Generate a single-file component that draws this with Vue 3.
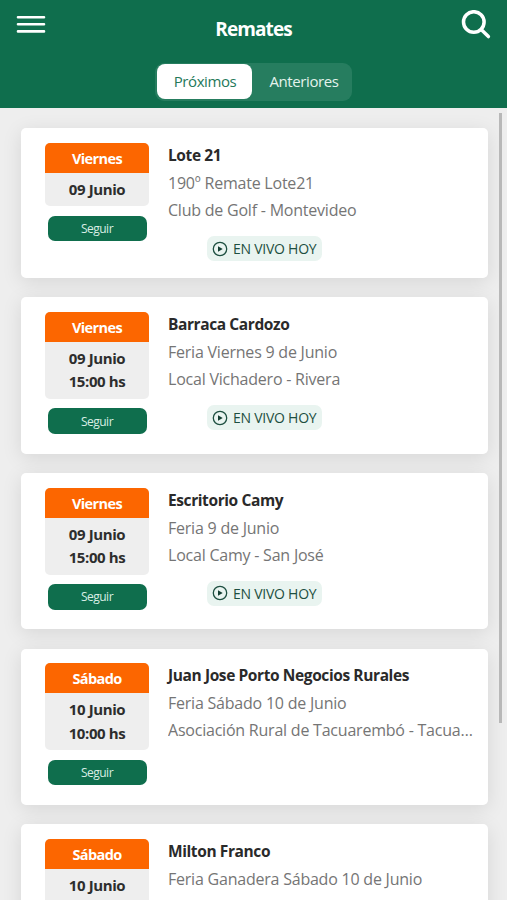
<script setup>
import { ref } from 'vue'

const tab = ref('proximos')

const remates = [
  { dia: 'Viernes', fecha: '09 Junio', hora: '', titulo: 'Lote 21', nombre: '190º Remate Lote21', lugar: 'Club de Golf - Montevideo', vivo: true },
  { dia: 'Viernes', fecha: '09 Junio', hora: '15:00 hs', titulo: 'Barraca Cardozo', nombre: 'Feria Viernes 9 de Junio', lugar: 'Local Vichadero - Rivera', vivo: true },
  { dia: 'Viernes', fecha: '09 Junio', hora: '15:00 hs', titulo: 'Escritorio Camy', nombre: 'Feria 9 de Junio', lugar: 'Local Camy - San José', vivo: true },
  { dia: 'Sábado', fecha: '10 Junio', hora: '10:00 hs', titulo: 'Juan Jose Porto Negocios Rurales', nombre: 'Feria Sábado 10 de Junio', lugar: 'Asociación Rural de Tacuarembó - Tacuarembó', vivo: false },
  { dia: 'Sábado', fecha: '10 Junio', hora: '10:00 hs', titulo: 'Milton Franco', nombre: 'Feria Ganadera Sábado 10 de Junio', lugar: 'Local Casa de Florida', vivo: false }
]
</script>

<template>
  <div class="app">
    <header class="header">
      <div class="top-bar">
        <svg class="menu-icon" width="30" height="20" viewBox="0 0 30 20">
          <path d="M2 2.2h26M2 9.3h26M2 16.4h26" />
        </svg>
        <h1>Remates</h1>
        <svg class="search-icon" width="30" height="30" viewBox="0 0 30 30">
          <circle cx="12.8" cy="12" r="10.3" />
          <path d="M20.4 19.8l7 6.8" />
        </svg>
      </div>
      <div class="tabs">
        <button :class="['tab', { active: tab === 'proximos' }]" @click="tab = 'proximos'">Próximos</button>
        <button :class="['tab', { active: tab === 'anteriores' }]" @click="tab = 'anteriores'">Anteriores</button>
      </div>
    </header>

    <main class="list">
      <article v-for="remate in remates" :key="remate.titulo" class="card">
        <div class="left">
          <div class="date">
            <div class="day">{{ remate.dia }}</div>
            <div class="when">
              <div>{{ remate.fecha }}</div>
              <div v-if="remate.hora">{{ remate.hora }}</div>
            </div>
          </div>
          <button class="follow">Seguir</button>
        </div>
        <div class="info">
          <h2>{{ remate.titulo }}</h2>
          <p>{{ remate.nombre }}</p>
          <p>{{ remate.lugar }}</p>
          <div v-if="remate.vivo" class="live">
            <svg width="16" height="16" viewBox="0 0 16 16">
              <circle cx="8" cy="8" r="6.7" />
              <path d="M6 5.2v5.6l4.7-2.8z" />
            </svg>
            <span>EN VIVO HOY</span>
          </div>
        </div>
      </article>
    </main>
    <div class="scrollbar"></div>
  </div>
</template>

<style>
body {
  background: #eeeeee;
}
</style>

<style scoped>
.app {
  position: relative;
  height: 900px;
  overflow: hidden;
  background: #eeeeee;
  font-family: 'Open Sans', 'Noto Sans', sans-serif;
}

button {
  border: 0;
  padding: 0;
  font-family: inherit;
}

.header {
  height: 108px;
  background: #0f6e4d;
}

.top-bar {
  display: flex;
  justify-content: space-between;
  height: 62.5px;
  padding: 0 16px;
}

.menu-icon,
.search-icon {
  fill: none;
  stroke: #fff;
  stroke-linecap: round;
}

.menu-icon {
  margin-top: 15px;
  stroke-width: 2.6;
}

.search-icon {
  margin-top: 10px;
  stroke-width: 3.5;
}

h1 {
  margin: 14px 0 0;
  color: #fff;
  font-size: 19px;
  line-height: 30px;
  font-weight: 700;
  letter-spacing: -0.9px;
}

.tabs {
  display: flex;
  align-items: center;
  box-sizing: border-box;
  width: 197px;
  height: 38px;
  margin: 0 auto;
  padding-left: 2px;
  background: #267d5f;
  border-radius: 9px;
}

.tab {
  flex: 1;
  height: 35px;
  padding: 0 0 1px 4px;
  color: #e4f3ec;
  font-size: 15px;
  letter-spacing: -0.4px;
  background: transparent;
  border-radius: 8px;
}

.tab.active {
  flex: none;
  width: 95px;
  padding-left: 1px;
  color: #25795a;
  background: #fff;
}

.list {
  display: flex;
  flex-direction: column;
  gap: 19.2px;
  padding: 20px 19.5px 0 20.5px;
}

.card {
  display: flex;
  align-items: flex-start;
  gap: 19px;
  padding: 14.8px 12px 17px 24.5px;
  background: #fff;
  border-radius: 5px;
  box-shadow: 0 4px 20px rgba(0, 0, 0, 0.1);
}

.left {
  flex: none;
  width: 104px;
  padding-bottom: 2.8px;
}

.date {
  overflow: hidden;
  background: #eeeeee;
  border-radius: 5px;
  text-align: center;
  font-size: 15px;
  font-weight: 700;
  letter-spacing: -0.4px;
}

.day {
  height: 30px;
  color: #fff;
  font-size: 14.5px;
  line-height: 31px;
  letter-spacing: -0.6px;
  background: #fc6600;
}

.when {
  padding: 5px 0;
  color: #2d2d2d;
  line-height: 23.5px;
}

.follow {
  display: block;
  width: 99px;
  height: 25.5px;
  margin: 9.5px auto 0;
  color: #d8ede4;
  font-size: 12px;
  letter-spacing: -0.5px;
  background: #0f6e4d;
  border-radius: 7px;
}

.info {
  flex: 1;
  min-width: 0;
}

h2 {
  margin: 0 0 2px;
  color: #2a2a2a;
  font-size: 15.5px;
  line-height: 25px;
  font-weight: 700;
  letter-spacing: -0.4px;
}

p {
  margin: 0;
  overflow: hidden;
  color: #757575;
  font-size: 16px;
  line-height: 27px;
  letter-spacing: -0.22px;
  white-space: nowrap;
  text-overflow: ellipsis;
}

.live {
  display: flex;
  align-items: center;
  gap: 5px;
  box-sizing: border-box;
  width: 115px;
  height: 24.5px;
  margin: 12.5px 0 0 39px;
  padding-left: 5px;
  color: #1d4f40;
  font-size: 14px;
  letter-spacing: -0.25px;
  white-space: nowrap;
  background: #e9f4f0;
  border-radius: 7px;
}

.live svg {
  flex: none;
  fill: none;
  stroke: #1d4f40;
  stroke-width: 1.3;
}

.live path {
  fill: #143f33;
  stroke: none;
}

.scrollbar {
  position: absolute;
  top: 113px;
  right: 5px;
  width: 3.5px;
  height: 610px;
  background: #b8b8b8;
}
</style>
